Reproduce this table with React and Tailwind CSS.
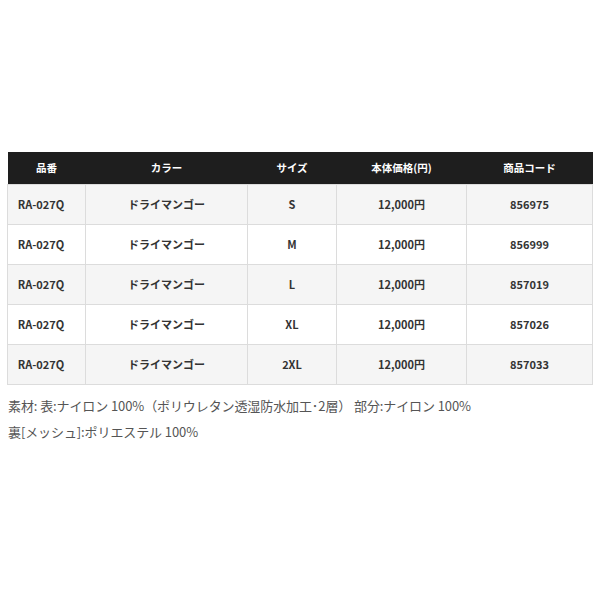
export default function App() {
  const rows = [
    ["S", "856975"],
    ["M", "856999"],
    ["L", "857019"],
    ["XL", "857026"],
    ["2XL", "857033"],
  ];
  const font = { fontFamily: '"Noto Sans CJK JP", "Noto Sans", sans-serif' };
  return (
    <div className="w-[600px] h-[600px] bg-white" style={font}>
      <div className="pt-[152px] pl-[7px] w-[592px]">
        <table className="w-[585px] border-collapse table-fixed text-[11px] font-bold text-[#333]">
          <colgroup>
            <col className="w-[78px]" />
            <col className="w-[162px]" />
            <col className="w-[89px]" />
            <col className="w-[130px]" />
            <col className="w-[126px]" />
          </colgroup>
          <thead>
            <tr className="h-[32px] bg-[#1e1e1e] text-white text-[10.5px]">
              <th className="font-bold">品番</th>
              <th className="font-bold">カラー</th>
              <th className="font-bold">サイズ</th>
              <th className="font-bold">本体価格(円)</th>
              <th className="font-bold">商品コード</th>
            </tr>
          </thead>
          <tbody>
            {rows.map(([size, code], i) => (
              <tr key={code} className={`h-[40px] ${i % 2 === 0 ? "bg-[#f5f5f5]" : "bg-white"}`}>
                <td className="border border-[#dcdcdc] text-center pr-[11px]">RA-027Q</td>
                <td className="border border-[#dcdcdc] text-center">ドライマンゴー</td>
                <td className="border border-[#dcdcdc] text-center">{size}</td>
                <td className="border border-[#dcdcdc] text-center">12,000円</td>
                <td className="border border-[#dcdcdc] text-center">{code}</td>
              </tr>
            ))}
          </tbody>
        </table>
      </div>
      <div className="pl-[8px] pt-[8px] text-[13px] leading-[26px] text-[#555] tracking-[-0.1px]">
        <p>素材: 表:ナイロン 100%（ポリウレタン透湿防水加工･2層） 部分:ナイロン 100%</p>
        <p>裏[メッシュ]:ポリエステル 100%</p>
      </div>
    </div>
  );
}
